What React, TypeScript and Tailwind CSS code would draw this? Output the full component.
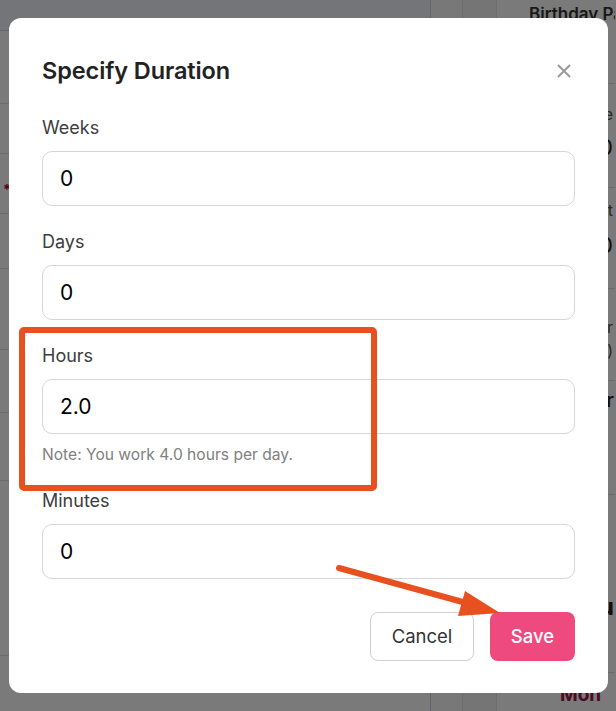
import React from 'react';

const fields = [
  { label: 'Weeks', value: '0' },
  { label: 'Days', value: '0' },
  { label: 'Hours', value: '2.0', note: 'Note: You work 4.0 hours per day.' },
  { label: 'Minutes', value: '0' },
];

const leftLines = [103, 153, 213, 268, 349, 412, 480, 655];

const BackgroundPage: React.FC = () => (
  <div className="flex h-[711px] w-[616px] bg-white" style={{ fontFamily: 'Inter, "Liberation Sans", sans-serif' }}>
    {/* main column (mostly hidden) */}
    <div className="relative w-[431px] border-r border-[#c7d3ea]">
      <div className="h-[31px] border-b border-[#c7d3ea] bg-[#f1f5fc]" />
      {leftLines.map((y) => (
        <div key={y} className="absolute left-0 right-0 border-b border-[#e2e2e2]" style={{ top: y }} />
      ))}
      <span className="absolute left-[3px] top-[179px] text-[14px] font-bold text-[#b0002a]">*</span>
    </div>
    <div className="w-[32px] border-r border-[#e4e4e4] bg-[#fafafa]" />
    <div className="w-[34px] border-r border-[#e4e4e4] bg-[#f4f4f4]" />
    {/* right panel */}
    <div className="flex w-[118px] flex-col text-[#222]">
      <div className="h-[84px] overflow-hidden border-b border-[#ddd] pl-[32px] pt-[2px] text-[17px] font-semibold whitespace-nowrap text-[#333]">
        Birthday Party
      </div>
      <div className="flex h-[104px] flex-col items-end border-b border-[#ddd] pr-[2px] pt-[18px]">
        <span className="text-[16px] leading-[24px] text-[#555]">Date</span>
        <span className="mt-[6px] text-[22px] leading-[30px]">2020</span>
      </div>
      <div className="flex h-[101px] flex-col items-end border-b border-[#ddd] pr-[2px] pt-[10px]">
        <span className="text-[16px] leading-[24px] text-[#555]">Start</span>
        <span className="mt-[8px] text-[22px] leading-[30px]">10:00</span>
      </div>
      <div className="flex h-[92px] flex-col items-end border-b border-[#ddd] pr-[2px] pt-[26px]">
        <span className="text-[16px] leading-[24px] text-[#555]">Hour</span>
        <span className="text-[16px] leading-[24px] text-[#555]">(2.0)</span>
      </div>
      <div className="flex h-[114px] justify-end border-b border-[#ddd] pr-[1px] pt-[4px] text-[20px] font-medium">
        Hour
      </div>
      <div className="flex h-[178px] justify-end border-b border-[#ddd] pr-[1px] pt-[94px] text-[24px] font-bold">
        Thu
      </div>
      <div className="pl-[63px] pt-[8px] text-[19px] font-bold text-[#a0134d]">Mon</div>
    </div>
  </div>
);

export default function App() {
  return (
    <div className="relative h-[711px] w-[616px] overflow-hidden">
      <BackgroundPage />
      <div className="absolute inset-0 bg-black/[0.52]" />

      {/* modal */}
      <div
        className="absolute left-[9px] top-[18px] h-[675px] w-[599px] rounded-[12px] bg-white px-[33px] pt-[39px]"
        style={{ fontFamily: 'Inter, "Liberation Sans", sans-serif' }}
      >
        <div className="flex h-[28px] items-center justify-between">
          <h2 className="text-[23.5px] font-semibold leading-[28px] tracking-[-0.1px] text-[#222]">Specify Duration</h2>
          <button className="mr-[2px] flex h-[18px] w-[18px] items-center justify-center">
            <svg width="16" height="16" viewBox="0 0 16 16" fill="none" stroke="#9a9a9a" strokeWidth="2">
              <path d="M2 2 L14 14 M14 2 L2 14" />
            </svg>
          </button>
        </div>

        <div className="mt-[31px] flex flex-col gap-[24px]">
          {fields.map((f) => (
            <div key={f.label} className="flex flex-col">
              <label className="text-[18px] leading-[24px] text-[#3d3d3d]">{f.label}</label>
              <div className="mt-[11px] flex h-[55px] items-center rounded-[10px] border border-[#d6d6d6] px-[17px] text-[21px] text-black">
                {f.value}
              </div>
              {f.note && (
                <p className="mt-[11px] text-[15.6px] leading-[20px] text-[#808080]">{f.note}</p>
              )}
            </div>
          ))}
        </div>

        <div className="mt-[33px] flex justify-end gap-[16px]">
          <button className="h-[49px] w-[104px] rounded-[8px] border border-[#d0d0d0] bg-white text-[18.5px] text-[#333]">
            Cancel
          </button>
          <button className="h-[49px] w-[85px] rounded-[8px] bg-[#ee4a7f] text-[18.5px] font-medium text-white">
            Save
          </button>
        </div>
      </div>

      {/* annotations */}
      <svg className="pointer-events-none absolute left-0 top-0" width="616" height="711">
        <rect x="22" y="330" width="352" height="158" rx="2" fill="none" stroke="#e8501f" strokeWidth="6" />
        <line x1="339" y1="568" x2="470" y2="604" stroke="#e8501f" strokeWidth="6" strokeLinecap="round" />
        <polygon points="465,591 500,613 458,616" fill="#e8501f" />
      </svg>
    </div>
  );
}
